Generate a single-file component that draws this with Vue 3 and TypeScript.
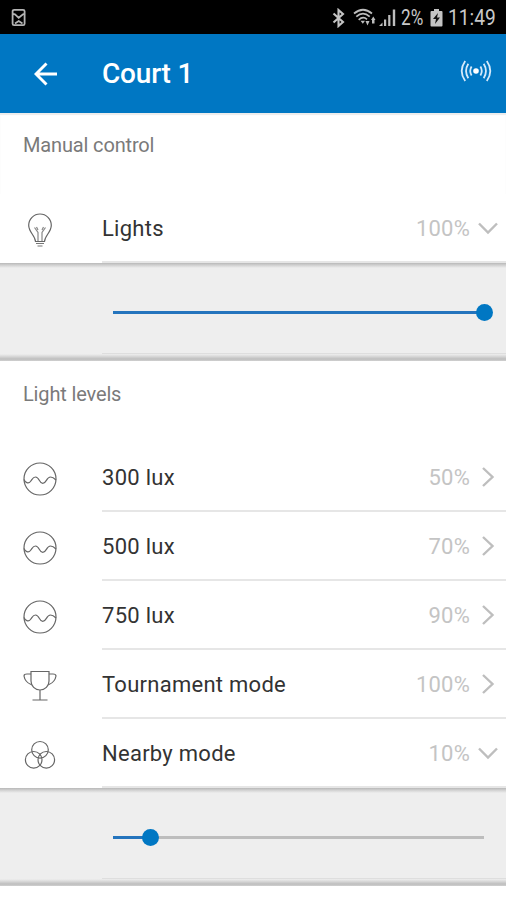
<script setup lang="ts">
interface Level {
  label: string
  value: number
  icon: 'bulb' | 'wave' | 'cup' | 'rings'
  open?: boolean
}
interface Group {
  title: string
  rows: Level[]
}

const groups: Group[] = [
  { title: 'Manual control', rows: [{ label: 'Lights', value: 100, icon: 'bulb', open: true }] },
  {
    title: 'Light levels',
    rows: [
      { label: '300 lux', value: 50, icon: 'wave' },
      { label: '500 lux', value: 70, icon: 'wave' },
      { label: '750 lux', value: 90, icon: 'wave' },
      { label: 'Tournament mode', value: 100, icon: 'cup' },
      { label: 'Nearby mode', value: 10, icon: 'rings', open: true },
    ],
  },
]
</script>

<template>
  <div class="screen">
    <div class="status">
      <svg class="mail" width="16" height="20" viewBox="0 0 16 20" fill="none" stroke="#b4b4b4" stroke-width="1.8">
        <rect x="1.600" y="1.800" width="12" height="15.400" rx="1.500" />
        <path d="M2 6l2 .3 3.700 3.500L12 6.300l2-.3M4 15.500l3.700-2.500 3.800 2.500" />
      </svg>
      <div class="tray">
        <svg width="14" height="20" viewBox="0 0 14 20" fill="none" stroke="#c4c4c4" stroke-width="2.100">
          <path d="M1.500 5.500L11 14l-4.500 4V2L11 6l-9.500 8.500" />
        </svg>
        <svg class="wifi" width="24" height="20" viewBox="0 0 24 20" fill="none" stroke="#bdbdbd" stroke-width="1.700">
          <path d="M1 5.500Q10 -2 19 5.500M3.300 8.700Q10 2.700 16.700 8.700M5.700 11.800Q10 7.800 14 11.300" />
          <path d="M7.500 12.800h4.500l-2.200 3zM12.500 13h4l-2 4.500zM18 12l2.300-3.500L22.500 12zM19 12h2.500v3.500H19z" fill="#bdbdbd" stroke="none" />
        </svg>
        <svg class="signal" width="19" height="20" viewBox="0 0 19 20" fill="#bdbdbd">
          <path d="M1 18l3.500-3.500V18zM6 11.500h2.200V18H6zM10.200 7h2.200v11h-2.200zM14.800 1.500h2.400V18h-2.400z" />
        </svg>
        <span class="charge">2%</span>
        <svg class="battery" width="14" height="20" viewBox="0 0 14 20">
          <path d="M4 1h5v2h2.500q1 0 1 1v13.500q0 1-1 1h-10q-1 0-1-1V4q0-1 1-1H4z" fill="#c4c4c4" />
          <path d="M8 5l-5 6h3l-1 5 5-6.500H7z" fill="#111" />
        </svg>
        <span class="clock">11:49</span>
      </div>
    </div>

    <header class="bar">
      <svg class="back" width="24" height="24" viewBox="0 0 24 24" fill="none" stroke="#fff" stroke-width="2.900">
        <path d="M23 12H2M12.500 1.500L2 12l10.500 10.500" />
      </svg>
      <h1>Court 1</h1>
      <svg class="beacon" width="32" height="24" viewBox="0 0 32 24" fill="none" stroke="#d5eafa" stroke-width="1.800">
        <circle cx="16" cy="12" r="2.800" fill="#fff" stroke="none" />
        <path d="M11.600 7.500Q8.800 12 11.600 16.500M8.300 4.800Q3.800 12 8.300 19.200M5.200 2Q-1.800 12 5.200 22M20.400 7.500Q23.200 12 20.400 16.500M23.700 4.800Q28.200 12 23.700 19.200M26.800 2Q33.800 12 26.800 22" />
      </svg>
    </header>

    <section v-for="group in groups" :key="group.title" class="group">
      <h2>{{ group.title }}</h2>
      <template v-for="row in group.rows" :key="row.label">
        <div class="row">
          <svg class="icon" width="36" height="36" viewBox="0 0 36 36" fill="none" stroke="#666" stroke-width="1.200">
            <template v-if="row.icon === 'bulb'">
              <path d="M13.500 29.500C13.300 23.500 6.700 20.500 6.700 13.300a11.300 11.300 0 0 1 22.600 0C29.300 20.500 22.700 23.500 22.500 29.500z" />
              <path d="M14 31.500h8M15.500 34h5" stroke="#777" />
              <path d="M16 29V20.500L12.500 15.500M20 29V20.500l3.500-5M14.500 15l1.500 3M21.500 15L20 18" stroke="#888" />
            </template>
            <template v-else-if="row.icon === 'wave'">
              <circle cx="18" cy="18" r="16" />
              <path d="M2 18.500C3 21.500 6.500 23 8.500 20.500C10.500 18 10.800 16 13.500 16C17.500 16 17 22.400 20.800 22.400C24.500 22.400 24.300 16 28.500 16C31 16 32.500 17.500 34 19" />
            </template>
            <template v-else-if="row.icon === 'cup'">
              <path d="M9 3.500h18v9.500C27 18 23 22 18 22S9 18 9 13zM18 22v9.500M10.500 32h15" />
              <path d="M9 6H5Q2 6 2 8Q3 14 9 16.500M27 6h4q3 0 3 2Q33 14 27 16.500" />
            </template>
            <template v-else>
              <circle cx="18" cy="12.800" r="8.300" />
              <circle cx="11.700" cy="22.800" r="8.300" />
              <circle cx="24.300" cy="22.800" r="8.300" />
            </template>
          </svg>
          <div class="body">
            <span class="label">{{ row.label }}</span>
            <span class="value">{{ row.value }}%</span>
            <svg class="chevron" width="20" height="20" viewBox="0 0 20 20" fill="none" stroke="#bebebe" stroke-width="2.400">
              <path :d="row.open ? 'M1 5.500l9 9 9-9' : 'M5 1l9.500 9L5 19'" />
            </svg>
          </div>
        </div>
        <div v-if="row.open" class="panel">
          <div class="slider">
            <div class="fill" :style="{ width: row.value + '%' }"><i class="knob"></i></div>
          </div>
          <div class="rule"></div>
        </div>
      </template>
    </section>
  </div>
</template>

<style>
body {
  margin: 0;
  background: #fff;
}
</style>

<style scoped>
.screen {
  width: 506px;
  height: 900px;
  overflow: hidden;
  background: #fff;
  font-family: Roboto, 'Liberation Sans', sans-serif;
}
.status {
  display: flex;
  justify-content: space-between;
  height: 34px;
  box-sizing: border-box;
  padding: 8px 11px 0;
  background: #000;
  color: #c8c8c8;
}
.tray {
  display: flex;
  height: 20px;
  line-height: 20px;
  font-size: 22px;
}
.wifi {
  margin-left: 7px;
}
.signal {
  margin-left: 1px;
}
.charge {
  width: 25px;
  margin-left: 4px;
  transform: scaleX(0.78);
  transform-origin: left;
}
.battery {
  margin-left: 4px;
}
.clock {
  width: 47px;
  margin-left: 4px;
  transform: scaleX(0.87);
  transform-origin: left;
}
.bar {
  display: flex;
  align-items: center;
  height: 79px;
  box-sizing: border-box;
  padding: 0 14px 0 34px;
  background: #0077c3;
  color: #fff;
}
.bar h1 {
  flex: 1;
  margin: 0 0 0 44px;
  font-size: 28px;
  font-weight: 500;
  line-height: 36px;
  letter-spacing: -0.2px;
}
.beacon {
  margin-bottom: 5px;
}
.group h2 {
  height: 82px;
  box-sizing: border-box;
  margin: 0;
  padding: 21px 23px 0;
  color: #7a7a7a;
  font-size: 20px;
  font-weight: 400;
  line-height: 24px;
  letter-spacing: -0.15px;
}
.group:first-of-type h2 {
  height: 81px;
  padding-top: 20px;
  box-shadow: inset 0 2px 1px #ececec;
}
.row {
  display: flex;
  align-items: center;
  height: 69px;
  padding-left: 22px;
}
.icon {
  margin-top: 2px;
}
.body {
  display: flex;
  flex: 1;
  align-items: center;
  height: 69px;
  box-sizing: border-box;
  margin-left: 44px;
  padding-right: 8px;
  border-bottom: 2px solid #e6e6e6;
}
.label {
  flex: 1;
  padding-top: 2px;
  color: #333;
  font-size: 22px;
  letter-spacing: 0.27px;
}
.value {
  padding-top: 2px;
  color: #c4c4c4;
  font-size: 22px;
  letter-spacing: 0.2px;
}
.chevron {
  margin-left: 8px;
}
.panel {
  display: flex;
  flex-direction: column;
  height: 98px;
  box-sizing: border-box;
  padding: 48px 0 7px;
  background: linear-gradient(#b8b8b8 0, #cfcfcf 2px, #eee 5px, #eee 91px, #dcdcdc 93px, #bebebe 96px, #d0d0d0 98px);
}
.slider {
  width: 371px;
  height: 3px;
  margin-left: 113px;
  background: #bdbdbd;
}
.fill {
  display: flex;
  align-items: center;
  justify-content: flex-end;
  height: 3px;
  background: #2474bd;
}
.knob {
  flex: none;
  width: 17px;
  height: 17px;
  margin-right: -9px;
  border-radius: 50%;
  background: #0077c3;
}
.rule {
  height: 1px;
  margin: auto 0 0 102px;
  background: #dedede;
}
</style>
